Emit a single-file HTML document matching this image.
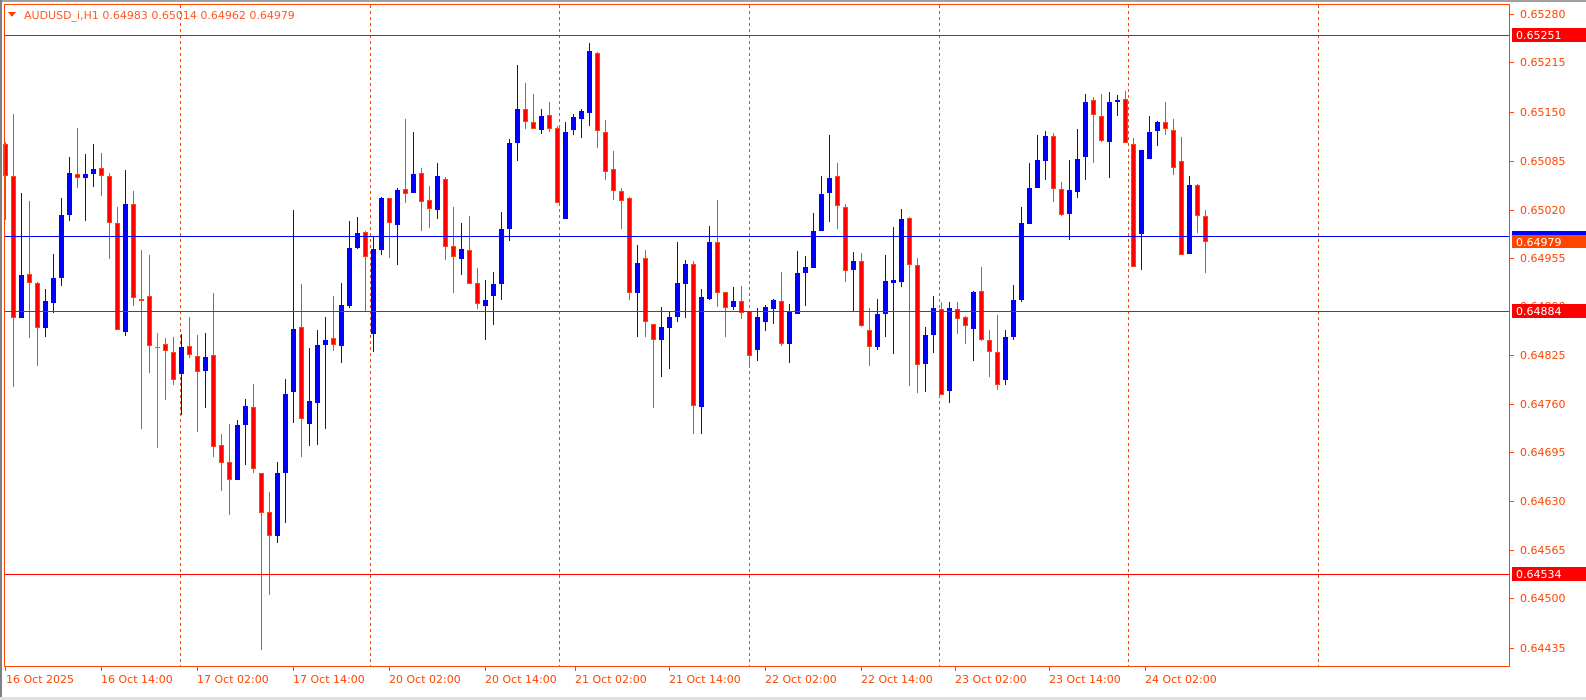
<!DOCTYPE html>
<html><head><meta charset="utf-8"><style>
html,body{margin:0;padding:0;background:#fff;width:1586px;height:700px;overflow:hidden;font-family:Tahoma,"DejaVu Sans","Liberation Sans",sans-serif;}
svg{display:block}
text{font-family:"DejaVu Sans","Liberation Sans",sans-serif;font-size:11px;}
</style></head><body>
<svg id="s" width="1586" height="700" xmlns="http://www.w3.org/2000/svg" shape-rendering="crispEdges">
<rect x="0" y="0" width="1586" height="700" fill="#fff"/>
<rect x="0" y="0" width="1586" height="2" fill="#a0a0a0"/>
<rect x="0" y="0" width="2" height="700" fill="#808080"/>
<rect x="0" y="697" width="1586" height="3" fill="#e0e0e0"/>
<g stroke="#ff4500" stroke-width="1" stroke-dasharray="3,3">
<line x1="180.5" y1="5" x2="180.5" y2="666"/>
<line x1="370.5" y1="5" x2="370.5" y2="666"/>
<line x1="559.5" y1="5" x2="559.5" y2="666"/>
<line x1="749.5" y1="5" x2="749.5" y2="666"/>
<line x1="939.5" y1="5" x2="939.5" y2="666"/>
<line x1="1128.5" y1="5" x2="1128.5" y2="666"/>
<line x1="1318.5" y1="5" x2="1318.5" y2="666"/>
</g>
<g id="c"></g>
<rect x="4" y="35" width="1506" height="1" fill="#ff0000"/>
<rect x="4" y="311" width="1506" height="1" fill="#ff0000"/>
<rect x="4" y="574" width="1506" height="1" fill="#ff0000"/>
<rect x="4" y="236" width="1506" height="1" fill="#0000ff"/>
<rect x="4.5" y="4.5" width="1505" height="662" fill="none" stroke="#ff4500" stroke-width="1"/>
<g fill="#ff4500">
<rect x="1510" y="14" width="4" height="1"/><rect x="1510" y="62" width="4" height="1"/><rect x="1510" y="112" width="4" height="1"/><rect x="1510" y="161" width="4" height="1"/><rect x="1510" y="210" width="4" height="1"/><rect x="1510" y="258" width="4" height="1"/><rect x="1510" y="355" width="4" height="1"/><rect x="1510" y="404" width="4" height="1"/><rect x="1510" y="452" width="4" height="1"/><rect x="1510" y="501" width="4" height="1"/><rect x="1510" y="550" width="4" height="1"/><rect x="1510" y="598" width="4" height="1"/><rect x="1510" y="648" width="4" height="1"/>
<rect x="5" y="667" width="1" height="4"/><rect x="101" y="667" width="1" height="4"/><rect x="197" y="667" width="1" height="4"/><rect x="293" y="667" width="1" height="4"/><rect x="389" y="667" width="1" height="4"/><rect x="485" y="667" width="1" height="4"/><rect x="575" y="667" width="1" height="4"/><rect x="669" y="667" width="1" height="4"/><rect x="765" y="667" width="1" height="4"/><rect x="861" y="667" width="1" height="4"/><rect x="955" y="667" width="1" height="4"/><rect x="1049" y="667" width="1" height="4"/><rect x="1145" y="667" width="1" height="4"/>
</g>
<g fill="#ff4500">
<text x="1520" y="18">0.65280</text>
<text x="1520" y="66">0.65215</text>
<text x="1520" y="116">0.65150</text>
<text x="1520" y="165">0.65085</text>
<text x="1520" y="214">0.65020</text>
<text x="1520" y="262">0.64955</text>
<text x="1520" y="310">0.64890</text>
<text x="1520" y="359">0.64825</text>
<text x="1520" y="408">0.64760</text>
<text x="1520" y="456">0.64695</text>
<text x="1520" y="505">0.64630</text>
<text x="1520" y="554">0.64565</text>
<text x="1520" y="602">0.64500</text>
<text x="1520" y="652">0.64435</text>
<text x="6" y="683">16 Oct 2025</text>
<text x="101" y="683">16 Oct 14:00</text>
<text x="197" y="683">17 Oct 02:00</text>
<text x="293" y="683">17 Oct 14:00</text>
<text x="389" y="683">20 Oct 02:00</text>
<text x="485" y="683">20 Oct 14:00</text>
<text x="575" y="683">21 Oct 02:00</text>
<text x="669" y="683">21 Oct 14:00</text>
<text x="765" y="683">22 Oct 02:00</text>
<text x="861" y="683">22 Oct 14:00</text>
<text x="955" y="683">23 Oct 02:00</text>
<text x="1049" y="683">23 Oct 14:00</text>
<text x="1145" y="683">24 Oct 02:00</text>
</g>
<rect x="1512" y="28" width="74" height="14" fill="#ff0000"/>
<text x="1516" y="39" fill="#fff">0.65251</text>
<rect x="1512" y="231" width="74" height="4" fill="#0000ff"/>
<rect x="1512" y="235" width="74" height="13" fill="#ff4500"/>
<text x="1516" y="246" fill="#fff">0.64979</text>
<rect x="1512" y="304" width="74" height="14" fill="#ff0000"/>
<text x="1516" y="315" fill="#fff">0.64884</text>
<rect x="1512" y="567" width="74" height="14" fill="#ff0000"/>
<text x="1516" y="578" fill="#fff">0.64534</text>
<polygon points="8,12 16,12 12,17" fill="#ff4500"/>
<text x="24" y="19" fill="#ff5a2a">AUDUSD_i,H1  0.64983 0.65014 0.64962 0.64979</text>
</svg>
<script>
var D=[
"r,144,176,142,220","r,176,318,114,387","b,275,318,193,318","r,274,283,201,338","r,283,328,282,366","b,301,328,289,337","b,278,303,254,313","b,215,278,198,286","b,173,215,157,221","r,174,178,128,188",
"b,174,178,154,221","b,169,174,144,187","r,168,176,153,196","r,176,223,173,259","r,223,330,207,330","b,204,332,170,336","r,204,298,191,306","r,299,301,250,429","r,296,346,255,373","g,347,348,333,448",
"r,344,351,338,400","r,352,380,337,385","b,347,374,334,415","r,346,355,317,358","r,356,372,335,432","b,357,371,333,408","r,355,447,293,457","r,445,463,434,491","r,462,480,424,515","b,425,480,420,480",
"b,406,425,399,465","r,407,469,384,473","r,473,513,473,650","r,512,536,492,595","b,473,536,462,543","b,394,473,379,523","b,329,392,210,423","r,327,419,284,457","b,401,424,348,446","b,345,403,330,445",
"b,340,345,317,429","r,338,345,296,351","b,305,346,283,363","b,248,306,221,308","b,233,248,217,249","r,232,257,231,311","b,249,334,237,352","b,198,250,197,255","r,198,223,198,258","b,190,225,188,265",
"r,189,194,119,203","b,174,193,132,193","r,173,202,168,231","r,200,209,186,228","b,176,210,163,219","r,179,247,177,260","r,246,257,207,293","b,249,259,223,275","r,250,284,216,284","r,283,304,268,309",
"b,300,306,280,340","b,284,296,272,325","b,229,284,212,300","b,143,229,139,241","b,109,143,65,161","r,109,122,83,129","r,122,129,94,129","b,116,130,109,134","r,115,129,102,132","r,128,203,126,203",
"b,132,219,122,219","b,117,130,114,135","b,111,119,109,138","b,51,113,43,126","r,53,131,52,148","r,132,172,120,180","r,169,191,151,200","r,191,201,188,229","r,198,293,197,300","b,263,293,245,337",
"r,258,322,250,337","r,324,340,324,408","b,327,340,307,377","b,317,328,311,369","b,283,317,242,322","b,264,284,260,318","r,264,406,261,434","b,297,407,289,434","b,242,299,226,300","r,242,293,200,307",
"r,292,308,292,337","b,301,307,287,310","r,301,313,286,319","r,311,356,311,368","b,317,350,308,361","b,307,322,305,331","b,300,309,299,324","r,301,344,272,346","b,312,344,304,363","b,273,314,251,314",
"b,267,273,256,306","b,231,268,213,268","b,194,231,176,231","b,178,193,135,222","r,176,206,163,229","r,207,271,204,282","b,261,270,252,311","r,261,326,253,327","r,330,347,308,366","b,314,347,299,350",
"b,281,314,255,337","b,280,283,227,354","b,219,282,209,287","r,218,265,217,386","r,265,365,258,393","b,335,364,327,392","b,308,335,296,353","r,309,395,302,395","b,308,391,302,403","r,309,319,302,334",
"r,317,326,316,344","b,292,329,291,361","r,291,340,267,341","r,340,352,330,377","r,352,385,315,390","b,337,380,330,385","b,300,337,285,340","b,223,300,207,302","b,188,224,163,224","b,160,188,135,188",
"b,136,161,131,180","r,136,189,133,202","r,189,215,182,216","b,190,214,160,240","b,159,192,129,198","b,102,157,94,180","r,100,115,97,163","r,116,141,94,142","b,102,142,92,178","b,100,102,95,116",
"r,99,143,91,143","r,144,267,138,267","b,150,234,150,270","b,132,159,116,159","b,122,131,121,146","r,122,129,102,135","r,130,168,119,175","r,161,255,137,255","b,185,254,176,254","r,185,216,184,233",
"r,216,242,210,273"];
var g=document.getElementById('c'),h='';
for(var k=0;k<D.length;k++){var p=D[k].split(','),t=p[0],bt=+p[1],bb=+p[2],wt=+p[3],wb=+p[4];
var c=Math.round(5.3+8*k);
var col=t=='b'?'#0000ff':(t=='g'?'#00e000':'#ff4500');
h+='<rect x="'+c+'" y="'+wt+'" width="1" height="'+Math.max(1,wb-wt)+'" fill="'+col+'"/>';
if(t=='b'){h+='<rect x="'+(c-2)+'" y="'+bt+'" width="5" height="'+Math.max(1,bb-bt)+'" fill="#0000ff"/>';}
else if(t=='g'){h+='<rect x="'+(c-2)+'" y="'+bt+'" width="5" height="1" fill="#00e000"/>';}
else{h+='<rect x="'+(c-2)+'" y="'+bt+'" width="5" height="'+Math.max(1,bb-bt)+'" fill="#ff4500"/>';
if(bb-bt>2)h+='<rect x="'+(c-1)+'" y="'+(bt+1)+'" width="3" height="'+(bb-bt-2)+'" fill="#ff0000"/>';}
}
g.innerHTML=h;
</script>
</body></html>
